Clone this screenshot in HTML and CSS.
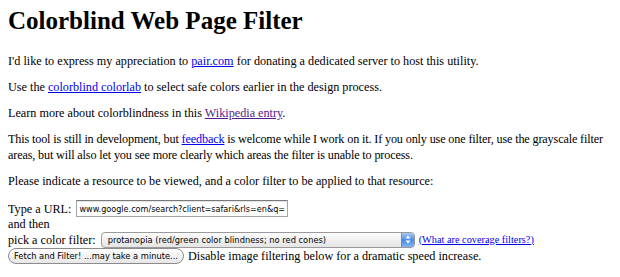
FILE: index.html
```html
<!DOCTYPE html>
<html lang="en">
<head>
  <meta charset="UTF-8">
  <title>Colorblind Web Page Filter</title>
  <link rel="stylesheet" href="styles.css">
</head>
<body>
  <h1>Colorblind Web Page Filter</h1>

  <p>I'd like to express my appreciation to <a href="#">pair.com</a> for donating a dedicated server to host this utility.</p>
  <p>Use the <a href="#">colorblind colorlab</a> to select safe colors earlier in the design process.</p>
  <p>Learn more about colorblindness in this <a href="#" class="visited">Wikipedia entry</a>.</p>
  <p class="nowrap">This tool is still in development, but <a href="#">feedback</a> is welcome while I work on it. If you only use one filter, use the grayscale filter<br>areas, but will also let you see more clearly which areas the filter is unable to process.</p>
  <p>Please indicate a resource to be viewed, and a color filter to be applied to that resource:</p>

  <form class="filter-form">
    <div class="row row-url">
      <label for="url">Type a URL:</label>
      <input type="text" id="url" class="url-box" value="www.google.com/search?client=safari&amp;rls=en&amp;q=">
    </div>
    <div class="row row-then">and then</div>
    <div class="row row-pick">
      <label for="filter">pick a color filter:</label>
      <span class="select-box" id="filter">
        <span class="select-text">protanopia (red/green color blindness; no red cones)</span>
        <span class="select-arrows">
          <svg width="6" height="9" viewBox="0 0 6 9"><path d="M3 0.5 L5.5 3.5 H0.5 Z M3 8.5 L5.5 5.5 H0.5 Z" fill="#fff"/></svg>
        </span>
      </span>
      <a href="#" class="small-link">(What are coverage filters?)</a>
    </div>
    <div class="row row-fetch">
      <button type="button" class="fetch-btn">Fetch and Filter! ...may take a minute...</button>
      <span>Disable image filtering below for a dramatic speed increase.</span>
    </div>
  </form>
</body>
</html>
```

FILE: styles.css
```css
body {
  font-family: "Liberation Serif", "Times New Roman", serif;
  font-size: 12.2px;
  line-height: 16px;
  margin: 0 0 0 8px;
  color: #000;
  background: #fff;
}
h1 {
  font-size: 25px;
  line-height: 30px;
  margin: 6px 0 17px;
}
p {
  margin: 0 0 10px;
}
.nowrap {
  white-space: nowrap;
  letter-spacing: -0.15px;
}
a {
  color: #0000ee;
}
a.visited {
  color: #551a8b;
}
.filter-form {
  margin-top: 11px;
}
.row {
  display: flex;
  align-items: center;
}
.row-url {
  height: 17px;
}
.row-then {
  height: 14px;
}
.row-pick {
  height: 17px;
}
.row-fetch {
  height: 16px;
}
.row label {
  margin-right: 5px;
}
.url-box {
  font-family: "DejaVu Sans", sans-serif;
  font-size: 8.1px;
  width: 212px;
  height: 17px;
  box-sizing: border-box;
  border: 1px solid #a5a5a5;
  border-top-color: #7a7a7a;
  padding: 0 2px;
  margin: 0;
  box-shadow: inset 0 1px 1px rgba(0,0,0,0.12);
}
.select-box {
  display: flex;
  align-items: center;
  width: 314px;
  height: 16px;
  box-sizing: border-box;
  border: 1px solid #9a9a9a;
  border-radius: 4px;
  background: linear-gradient(#fdfdfd, #e4e4e4);
  font-family: "DejaVu Sans", sans-serif;
  font-size: 8.3px;
  overflow: hidden;
  margin-right: 4px;
}
.select-text {
  flex: 1;
  padding-left: 6px;
}
.select-arrows {
  width: 12px;
  height: 100%;
  display: flex;
  align-items: center;
  justify-content: center;
  background: linear-gradient(#a8cbf5, #4a8ce6 50%, #7fb5f2);
  border-left: 1px solid #6b8fc4;
}
.small-link {
  font-size: 10.3px;
}
.fetch-btn {
  font-family: "DejaVu Sans", sans-serif;
  font-size: 8.3px;
  height: 16px;
  width: 176px;
  padding: 0;
  margin: 0 4px 0 0;
  border: 1px solid #8c8c8c;
  border-radius: 8px;
  background: linear-gradient(#ffffff, #e6e6e6);
  color: #000;
}
```
